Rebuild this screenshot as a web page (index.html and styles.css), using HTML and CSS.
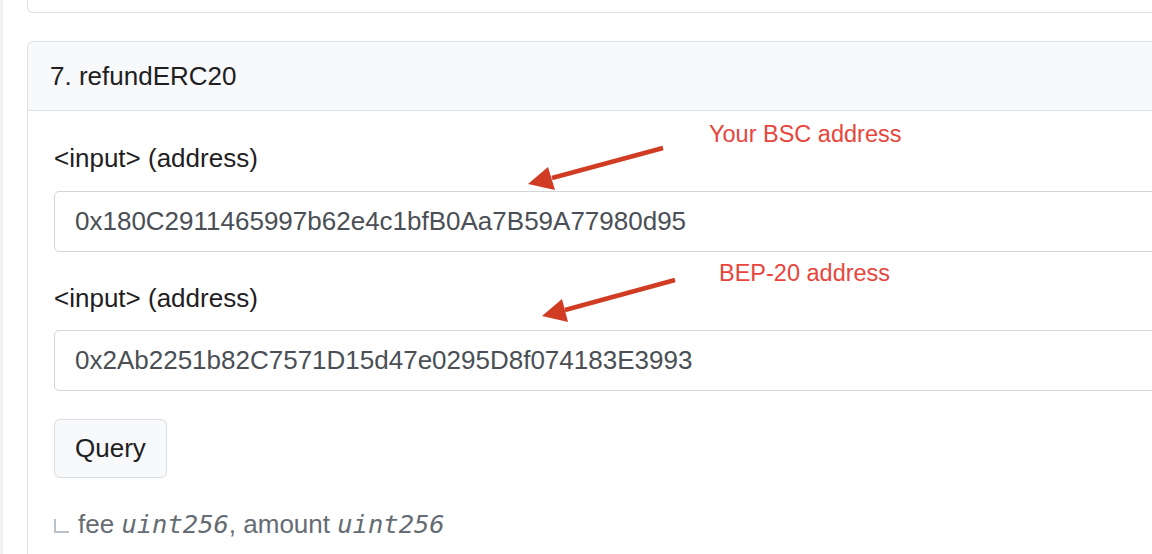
FILE: index.html
```html
<!DOCTYPE html>
<html lang="en">
<head>
<meta charset="utf-8">
<title>refundERC20</title>
<link rel="stylesheet" href="styles.css">
</head>
<body>
<div class="page">
  <div class="rail"></div>
  <div class="main">
    <div class="card card-prev"></div>
    <div class="card">
      <div class="card-header">7. refundERC20</div>
      <div class="card-body">
        <div class="label">&lt;input&gt; (address)</div>
        <input class="field" type="text" readonly value="0x180C2911465997b62e4c1bfB0Aa7B59A77980d95">
        <div class="label label-second">&lt;input&gt; (address)</div>
        <input class="field" type="text" readonly value="0x2Ab2251b82C7571D15d47e0295D8f074183E3993">
        <button class="btn" type="button">Query</button>
        <div class="returns">
          <span class="elbow"></span>
          <span>fee <i class="type">uint256</i>, amount <i class="type">uint256</i></span>
        </div>
      </div>
    </div>
  </div>
  <div class="note note-one">Your BSC address</div>
  <div class="note note-two">BEP-20 address</div>
  <svg class="arrows" width="1152" height="554" viewBox="0 0 1152 554" aria-hidden="true">
    <line x1="663" y1="148" x2="552" y2="178" stroke="#d13c24" stroke-width="4.5" stroke-linecap="butt"/>
    <polygon points="528,184 548,167 555,190" fill="#d13c24"/>
    <line x1="675" y1="280" x2="565" y2="310" stroke="#d13c24" stroke-width="4.5" stroke-linecap="butt"/>
    <polygon points="542,316 562,299 568,322" fill="#d13c24"/>
  </svg>
</div>
</body>
</html>
```

FILE: styles.css
```css
* {
  box-sizing: border-box;
}

html, body {
  margin: 0;
  padding: 0;
  background: #ffffff;
}

body {
  font-family: "Liberation Sans", Arial, Helvetica, sans-serif;
  color: #1e2022;
  width: 1152px;
  height: 554px;
  overflow: hidden;
}

.page {
  position: relative;
  display: flex;
  height: 554px;
  overflow: hidden;
}

.rail {
  width: 3px;
  flex: 0 0 3px;
  background: #eff1f5;
}

.main {
  flex: 1;
  padding-left: 24px;
  overflow: hidden;
}

.card {
  width: calc(100% + 120px);
  border: 1px solid #dcdfe3;
  border-radius: 6px;
  background: #ffffff;
  margin-top: 28px;
}

.card-prev {
  margin-top: 0;
  height: 13px;
  border-top: none;
  border-radius: 0 0 6px 6px;
}

.card-header {
  height: 69px;
  display: flex;
  align-items: center;
  padding: 0 22px;
  background: #f8f9fa;
  border-bottom: 1px solid #dcdfe3;
  border-radius: 6px 6px 0 0;
  font-size: 26px;
  color: #1e2022;
}

.card-body {
  padding: 32px 26px 40px 26px;
  display: flex;
  flex-direction: column;
  align-items: flex-start;
}

.label {
  font-size: 26px;
  line-height: 30px;
  color: #1e2022;
  margin-bottom: 18px;
}

.label-second {
  margin-top: 31px;
  margin-bottom: 17px;
}

.field {
  display: block;
  width: 100%;
  height: 61px;
  margin: 0;
  padding: 0 20px;
  border: 1px solid #d1d5da;
  border-radius: 5px;
  background: #ffffff;
  font-family: "Liberation Sans", Arial, Helvetica, sans-serif;
  font-size: 26px;
  color: #4a4f55;
  outline: none;
}

.btn {
  margin-top: 28px;
  height: 59px;
  padding: 0 20px;
  border: 1px solid #dadde1;
  border-radius: 6px;
  background: #f8f9fa;
  font-family: "Liberation Sans", Arial, Helvetica, sans-serif;
  font-size: 26px;
  color: #1e2022;
}

.returns {
  margin-top: 31px;
  display: flex;
  align-items: center;
  font-size: 26px;
  line-height: 30px;
  color: #656c73;
}

.elbow {
  display: inline-block;
  width: 15px;
  height: 14px;
  border-left: 2px solid #bcc1c9;
  border-bottom: 2px solid #bcc1c9;
  margin-right: 9px;
  margin-top: 3px;
}

.type {
  font-family: "DejaVu Sans Mono", "Liberation Mono", monospace;
  font-style: italic;
  font-size: 25.5px;
  color: #656c73;
}

.note {
  position: absolute;
  font-size: 23.5px;
  line-height: 28px;
  color: #e8453c;
  white-space: nowrap;
}

.note-one {
  left: 709px;
  top: 120px;
}

.note-two {
  left: 719px;
  top: 259px;
}

.arrows {
  position: absolute;
  left: 0;
  top: 0;
  pointer-events: none;
}
```
